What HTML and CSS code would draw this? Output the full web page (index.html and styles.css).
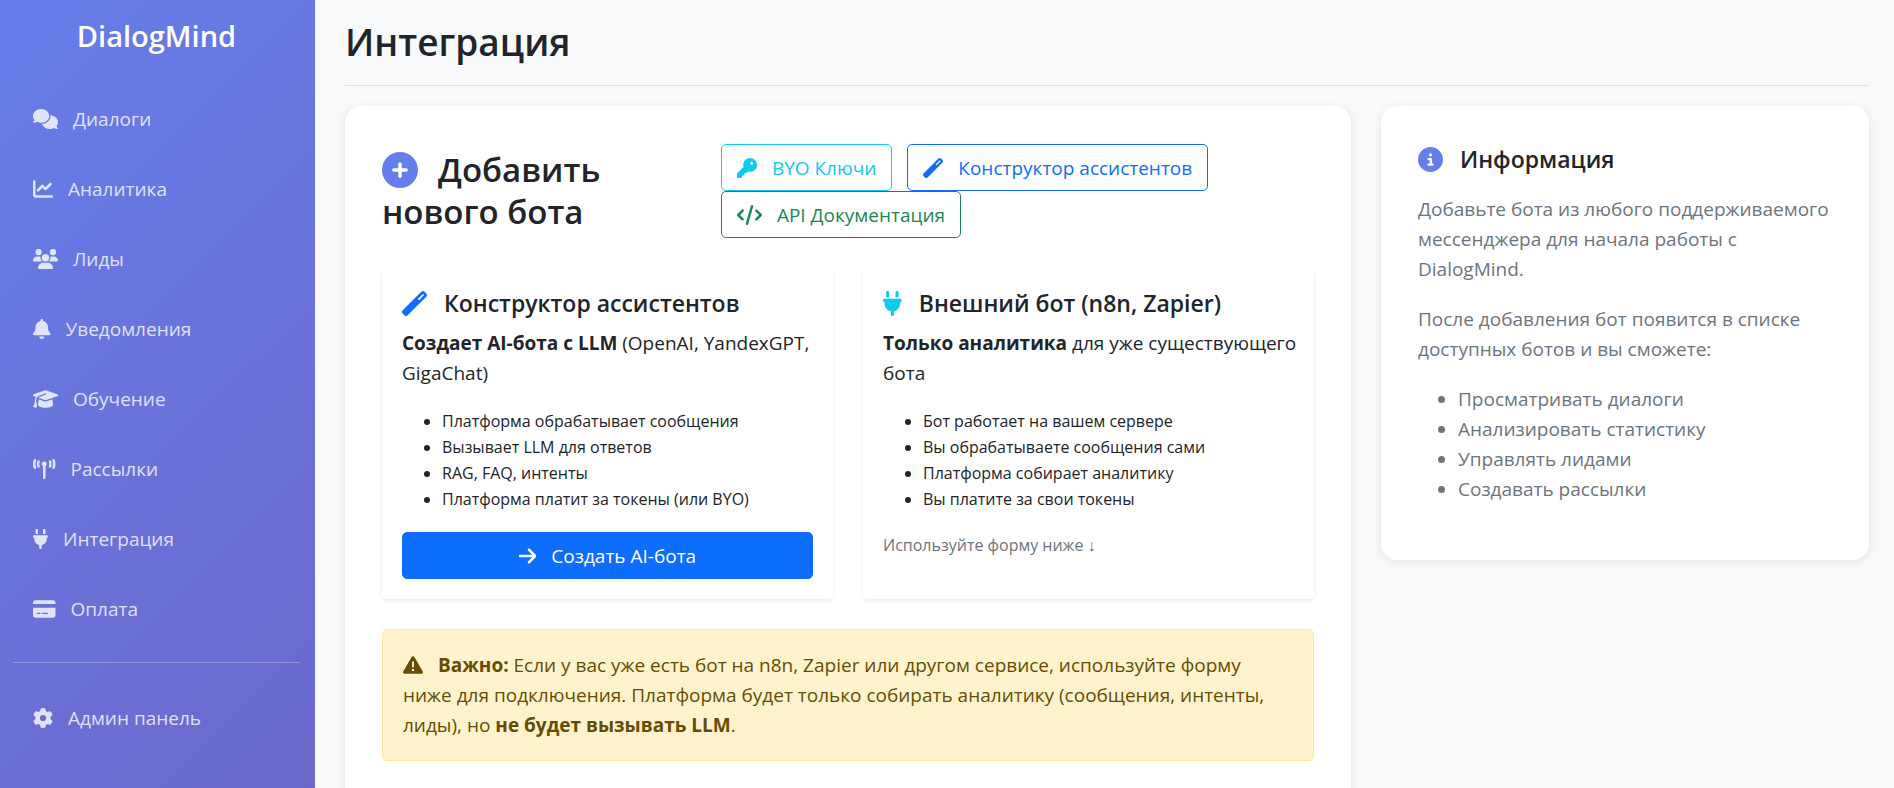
FILE: index.html
```
<!DOCTYPE html>
<html lang="ru">
<head>
  <meta charset="UTF-8" />
  <meta name="viewport" content="width=device-width, initial-scale=1.0"/>
  <title>Интеграция - DialogMind</title>
  <link rel="stylesheet" href="styles.css">
</head>
<body>

  <div class="app">
    <nav class="sidebar">
      <h4 class="brand">DialogMind</h4>
      <a class="nav-link" href="#"><svg class="icon" viewBox="0 0 640 512"><path d="M208 352c114.9 0 208-78.8 208-176S322.9 0 208 0S0 78.8 0 176c0 38.6 14.7 74.3 39.6 103.4c-3.5 9.4-8.7 17.7-14.2 24.7c-4.8 6.2-9.7 11-13.3 14.3c-1.8 1.6-3.3 2.9-4.3 3.7c-.5 .4-.9 .7-1.1 .8l-.2 .2C1 327.2-1.4 334.4 .8 340.9S9.1 352 16 352c21.8 0 43.8-5.6 62.1-12.5c9.2-3.5 17.8-7.4 25.2-11.4C134.1 343.3 169.8 352 208 352zM448 176c0 112.3-99.1 196.9-216.5 207C255.8 457.4 336.4 512 432 512c38.2 0 73.9-8.7 104.7-23.9c7.5 4 16 7.9 25.2 11.4c18.3 6.9 40.3 12.5 62.1 12.5c6.9 0 13.1-4.5 15.2-11.1c2.1-6.6-.2-13.8-5.8-17.9l-.2-.2c-.2-.2-.6-.4-1.1-.8c-1-.8-2.5-2-4.3-3.7c-3.6-3.3-8.5-8.1-13.3-14.3c-5.5-7-10.7-15.4-14.2-24.7c24.9-29 39.6-64.7 39.6-103.4c0-92.8-84.9-168.9-192.6-175.5c.4 5.1 .6 10.3 .6 15.5z"/></svg>Диалоги</a>
      <a class="nav-link" href="#"><svg class="icon" viewBox="0 0 512 512"><path d="M64 64c0-17.7-14.3-32-32-32S0 46.3 0 64V400c0 44.2 35.8 80 80 80H480c17.7 0 32-14.3 32-32s-14.3-32-32-32H80c-8.8 0-16-7.2-16-16V64zm406.6 86.6c12.5-12.5 12.5-32.8 0-45.3s-32.8-12.5-45.3 0L320 210.7l-57.4-57.4c-12.5-12.5-32.8-12.5-45.3 0l-112 112c-12.5 12.5-12.5 32.8 0 45.3s32.8 12.5 45.3 0L240 221.3l57.4 57.4c12.5 12.5 32.8 12.5 45.3 0l128-128z"/></svg>Аналитика</a>
      <a class="nav-link" href="#"><svg class="icon" viewBox="0 0 640 512"><path d="M144 0a80 80 0 1 1 0 160A80 80 0 1 1 144 0zM512 0a80 80 0 1 1 0 160A80 80 0 1 1 512 0zM0 298.7C0 239.8 47.8 192 106.7 192h42.7c15.9 0 31 3.5 44.6 9.7c-1.3 7.2-1.9 14.7-1.9 22.3c0 38.2 16.8 72.5 43.3 96c-.2 0-.4 0-.7 0H21.3C9.6 320 0 310.4 0 298.7zM405.3 320c-.2 0-.4 0-.7 0c26.6-23.5 43.3-57.8 43.3-96c0-7.6-.7-15-1.9-22.3c13.6-6.3 28.7-9.7 44.6-9.7h42.7C592.2 192 640 239.8 640 298.7c0 11.8-9.6 21.3-21.3 21.3H405.3zM224 224a96 96 0 1 1 192 0 96 96 0 1 1 -192 0zM128 485.3C128 411.7 187.7 352 261.3 352H378.7C452.3 352 512 411.7 512 485.3c0 14.7-11.9 26.7-26.7 26.7H154.7c-14.7 0-26.7-11.9-26.7-26.7z"/></svg>Лиды</a>
      <a class="nav-link" href="#"><svg class="icon" viewBox="0 0 448 512"><path d="M224 0c-17.7 0-32 14.3-32 32V51.2C119 66 64 130.6 64 208v18.8c0 47-17.3 92.4-48.5 127.6l-7.4 8.3c-8.4 9.4-10.4 22.9-5.3 34.4S19.4 416 32 416H416c12.6 0 24-7.4 29.2-18.9s3.1-25-5.3-34.4l-7.4-8.3C401.3 319.2 384 273.9 384 226.8V208c0-77.4-55-142-128-156.8V32c0-17.7-14.3-32-32-32zm45.3 493.3c12-12 18.7-28.3 18.7-45.3H224 160c0 17 6.7 33.3 18.7 45.3s28.3 18.7 45.3 18.7s33.3-6.7 45.3-18.7z"/></svg>Уведомления</a>
      <a class="nav-link" href="#"><svg class="icon" viewBox="0 0 640 512"><path d="M320 32c-8.1 0-16.1 1.4-23.7 4.1L15.8 137.4C6.3 140.9 0 149.9 0 160s6.3 19.1 15.8 22.6l57.9 20.9C57.3 229.3 48 259.8 48 291.9v28.1c0 28.4-10.8 57.7-22.3 80.8c-6.5 13-13.9 25.8-22.5 37.6C0 442.7-.9 448.3 .9 453.4s6 8.9 11.2 10.2l64 16c4.2 1.1 8.7 .3 12.4-2s6.3-6.1 7.1-10.4c8.6-42.8 4.3-81.2-2.1-108.7C90.3 344.3 86 329.8 80 316.5V291.9c0-30.2 10.2-58.7 27.9-81.5c12.9-15.5 29.6-28 49.2-35.7l157-61.7c8.2-3.2 17.5 .8 20.7 9s-.8 17.5-9 20.7l-157 61.7c-12.4 4.9-23.3 12.4-32.2 21.6l159.6 57.6c7.6 2.7 15.6 4.1 23.7 4.1s16.1-1.4 23.7-4.1L624.2 182.6c9.5-3.4 15.8-12.5 15.8-22.6s-6.3-19.1-15.8-22.6L343.7 36.1C336.1 33.4 328.1 32 320 32zM128 408c0 35.3 86 72 192 72s192-36.7 192-72L496.7 262.6 354.5 314c-11.1 4-22.8 6-34.5 6s-23.5-2-34.5-6L143.3 262.6 128 408z"/></svg>Обучение</a>
      <a class="nav-link" href="#"><svg class="icon" viewBox="0 0 576 512"><path d="M80.3 44C69.8 69.9 64 98.2 64 128s5.8 58.1 16.3 84c6.6 16.4-1.3 35-17.7 41.7s-35-1.3-41.7-17.7C7.4 202.6 0 166.1 0 128S7.4 53.4 20.9 20C27.6 3.6 46.2-4.3 62.6 2.3S86.9 27.6 80.3 44zM555.1 20C568.6 53.4 576 89.9 576 128s-7.4 74.6-20.9 108c-6.6 16.4-25.3 24.3-41.7 17.7S489.1 228.4 495.7 212c10.5-25.9 16.3-54.2 16.3-84s-5.8-58.1-16.3-84C489.1 27.6 497 9 513.4 2.3s35 1.3 41.7 17.7zM352 128c0 23.7-12.9 44.4-32 55.4V480c0 17.7-14.3 32-32 32s-32-14.3-32-32V183.4c-19.1-11.1-32-31.7-32-55.4c0-35.3 28.7-64 64-64s64 28.7 64 64zM170.6 76.8C163.8 92.4 160 109.7 160 128s3.8 35.6 10.6 51.2c7.1 16.2-.3 35.1-16.5 42.1s-35.1-.3-42.1-16.5c-10.3-23.6-16-49.6-16-76.8s5.7-53.2 16-76.8c7.1-16.2 25.9-23.6 42.1-16.5s23.6 25.9 16.5 42.1zM464 51.2c10.3 23.6 16 49.6 16 76.8s-5.7 53.2-16 76.8c-7.1 16.2-25.9 23.6-42.1 16.5s-23.6-25.9-16.5-42.1c6.8-15.6 10.6-32.9 10.6-51.2s-3.8-35.6-10.6-51.2c-7.1-16.2 .3-35.1 16.5-42.1s35.1 .3 42.1 16.5z"/></svg>Рассылки</a>
      <a class="nav-link" href="#"><svg class="icon" viewBox="0 0 384 512"><path d="M96 0C78.3 0 64 14.3 64 32v96h64V32c0-17.7-14.3-32-32-32zM288 0c-17.7 0-32 14.3-32 32v96h64V32c0-17.7-14.3-32-32-32zM32 160c-17.7 0-32 14.3-32 32s14.3 32 32 32v32c0 77.4 55 142 128 156.8V480c0 17.7 14.3 32 32 32s32-14.3 32-32V412.8C297 398 352 333.4 352 256V224c17.7 0 32-14.3 32-32s-14.3-32-32-32H32z"/></svg>Интеграция</a>
      <a class="nav-link" href="#"><svg class="icon" viewBox="0 0 576 512"><path d="M64 32C28.7 32 0 60.7 0 96v32H576V96c0-35.3-28.7-64-64-64H64zM576 224H0V416c0 35.3 28.7 64 64 64H512c35.3 0 64-28.7 64-64V224zM112 352h64c8.8 0 16 7.2 16 16s-7.2 16-16 16H112c-8.8 0-16-7.2-16-16s7.2-16 16-16zm112 16c0-8.8 7.2-16 16-16H368c8.8 0 16 7.2 16 16s-7.2 16-16 16H240c-8.8 0-16-7.2-16-16z"/></svg>Оплата</a>
      <hr class="divider">
      <a class="nav-link" href="#"><svg class="icon" viewBox="0 0 512 512"><path d="M495.9 166.6c3.2 8.7 .5 18.4-6.4 24.6l-43.3 39.4c1.1 8.3 1.7 16.8 1.7 25.4s-.6 17.1-1.7 25.4l43.3 39.4c6.9 6.2 9.6 15.9 6.4 24.6c-4.4 11.9-9.7 23.3-15.8 34.3l-4.7 8.1c-6.6 11-14 21.4-22.1 31.2c-5.9 7.2-15.7 9.6-24.5 6.8l-55.7-17.7c-13.4 10.3-28.2 18.9-44 25.4l-12.5 57.1c-2 9.1-9 16.3-18.2 17.8c-13.8 2.3-28 3.5-42.5 3.5s-28.7-1.2-42.5-3.5c-9.2-1.5-16.2-8.7-18.2-17.8l-12.5-57.1c-15.8-6.5-30.6-15.1-44-25.4L83.1 425.9c-8.8 2.8-18.6 .3-24.5-6.8c-8.1-9.8-15.5-20.2-22.1-31.2l-4.7-8.1c-6.1-11-11.4-22.4-15.8-34.3c-3.2-8.7-.5-18.4 6.4-24.6l43.3-39.4C64.6 273.1 64 264.6 64 256s.6-17.1 1.7-25.4L22.4 191.2c-6.9-6.2-9.6-15.9-6.4-24.6c4.4-11.9 9.7-23.3 15.8-34.3l4.7-8.1c6.6-11 14-21.4 22.1-31.2c5.9-7.2 15.7-9.6 24.5-6.8l55.7 17.7c13.4-10.3 28.2-18.9 44-25.4l12.5-57.1c2-9.1 9-16.3 18.2-17.8C227.3 1.2 241.5 0 256 0s28.7 1.2 42.5 3.5c9.2 1.5 16.2 8.7 18.2 17.8l12.5 57.1c15.8 6.5 30.6 15.1 44 25.4l55.7-17.7c8.8-2.8 18.6-.3 24.5 6.8c8.1 9.8 15.5 20.2 22.1 31.2l4.7 8.1c6.1 11 11.4 22.4 15.8 34.3zM256 336a80 80 0 1 0 0-160 80 80 0 1 0 0 160z"/></svg>Админ панель</a>
    </nav>

    <main class="main">
      <header class="page-header">
        <h1>Интеграция</h1>
      </header>

      <div class="row">
        <section class="card">
          <div class="card-head">
            <h3><svg class="icon accent" viewBox="0 0 512 512"><path d="M256 512A256 256 0 1 0 256 0a256 256 0 1 0 0 512zM232 344V280H168c-13.3 0-24-10.7-24-24s10.7-24 24-24h64V168c0-13.3 10.7-24 24-24s24 10.7 24 24v64h64c13.3 0 24 10.7 24 24s-10.7 24-24 24H280v64c0 13.3-10.7 24-24 24s-24-10.7-24-24z"/></svg>Добавить<br>нового бота</h3>
            <div class="buttons">
              <a class="btn btn-info" href="#"><svg class="icon" viewBox="0 0 512 512"><path d="M336 352c97.2 0 176-78.8 176-176S433.2 0 336 0S160 78.8 160 176c0 18.7 2.9 36.8 8.3 53.7L7 391c-4.5 4.5-7 10.6-7 17v80c0 13.3 10.7 24 24 24h80c13.3 0 24-10.7 24-24V448h40c13.3 0 24-10.7 24-24V384h40c6.4 0 12.5-2.5 17-7l33.3-33.3c16.9 5.4 35 8.3 53.7 8.3zM376 96a40 40 0 1 1 0 80 40 40 0 1 1 0-80z"/></svg>BYO Ключи</a>
              <a class="btn btn-outline" href="#"><svg class="icon" viewBox="0 0 512 512"><path d="M14.1 463.3c-18.7-18.7-18.7-49.1 0-67.9L395.4 14.1c18.7-18.7 49.1-18.7 67.9 0l34.6 34.6c18.7 18.7 18.7 49.1 0 67.9L116.5 497.9c-18.7 18.7-49.1 18.7-67.9 0L14.1 463.3zM347.6 187.6l105-105L429.4 59.3l-105 105 23.3 23.3z"/></svg>Конструктор ассистентов</a>
              <a class="btn btn-success" href="#"><svg class="icon" viewBox="0 0 640 512"><path d="M392.8 1.2c-17-4.9-34.7 5-39.6 22l-128 448c-4.9 17 5 34.7 22 39.6s34.7-5 39.6-22l128-448c4.9-17-5-34.7-22-39.6zm80.6 120.1c-12.5 12.5-12.5 32.8 0 45.3L562.7 256l-89.4 89.4c-12.5 12.5-12.5 32.8 0 45.3s32.8 12.5 45.3 0l112-112c12.5-12.5 12.5-32.8 0-45.3l-112-112c-12.5-12.5-32.8-12.5-45.3 0zm-306.7 0c-12.5-12.5-32.8-12.5-45.3 0l-112 112c-12.5 12.5-12.5 32.8 0 45.3l112 112c12.5 12.5 32.8 12.5 45.3 0s12.5-32.8 0-45.3L77.3 256l89.4-89.4c12.5-12.5 12.5-32.8 0-45.3z"/></svg>API Документация</a>
            </div>
          </div>

          <div class="options">
            <div class="option">
              <h5><svg class="icon primary" viewBox="0 0 512 512"><path d="M14.1 463.3c-18.7-18.7-18.7-49.1 0-67.9L395.4 14.1c18.7-18.7 49.1-18.7 67.9 0l34.6 34.6c18.7 18.7 18.7 49.1 0 67.9L116.5 497.9c-18.7 18.7-49.1 18.7-67.9 0L14.1 463.3zM347.6 187.6l105-105L429.4 59.3l-105 105 23.3 23.3z"/></svg>Конструктор ассистентов</h5>
              <p><strong>Создает AI-бота с LLM</strong> (OpenAI, YandexGPT, GigaChat)</p>
              <ul class="small">
                <li>Платформа обрабатывает сообщения</li>
                <li>Вызывает LLM для ответов</li>
                <li>RAG, FAQ, интенты</li>
                <li>Платформа платит за токены (или BYO)</li>
              </ul>
              <a class="btn btn-primary" href="#"><svg class="icon" viewBox="0 0 448 512"><path d="M438.6 278.6c12.5-12.5 12.5-32.8 0-45.3l-160-160c-12.5-12.5-32.8-12.5-45.3 0s-12.5 32.8 0 45.3L338.8 224 32 224c-17.7 0-32 14.3-32 32s14.3 32 32 32l306.7 0L233.4 393.4c-12.5 12.5-12.5 32.8 0 45.3s32.8 12.5 45.3 0l160-160z"/></svg>Создать AI-бота</a>
            </div>
            <div class="option">
              <h5><svg class="icon info" viewBox="0 0 384 512"><path d="M96 0C78.3 0 64 14.3 64 32v96h64V32c0-17.7-14.3-32-32-32zM288 0c-17.7 0-32 14.3-32 32v96h64V32c0-17.7-14.3-32-32-32zM32 160c-17.7 0-32 14.3-32 32s14.3 32 32 32v32c0 77.4 55 142 128 156.8V480c0 17.7 14.3 32 32 32s32-14.3 32-32V412.8C297 398 352 333.4 352 256V224c17.7 0 32-14.3 32-32s-14.3-32-32-32H32z"/></svg>Внешний бот (n8n, Zapier)</h5>
              <p><strong>Только аналитика</strong> для уже существующего бота</p>
              <ul class="small">
                <li>Бот работает на вашем сервере</li>
                <li>Вы обрабатываете сообщения сами</li>
                <li>Платформа собирает аналитику</li>
                <li>Вы платите за свои токены</li>
              </ul>
              <p class="small muted">Используйте форму ниже ↓</p>
            </div>
          </div>

          <div class="alert">
            <svg class="icon" viewBox="0 0 512 512"><path d="M256 32c14.2 0 27.3 7.5 34.5 19.8l216 368c7.3 12.4 7.3 27.7 .2 40.1S486.3 480 472 480H40c-14.3 0-27.6-7.7-34.7-20.1s-7-27.8 .2-40.1l216-368C228.7 39.5 241.8 32 256 32zm0 128c-13.3 0-24 10.7-24 24V296c0 13.3 10.7 24 24 24s24-10.7 24-24V184c0-13.3-10.7-24-24-24zm32 224a32 32 0 1 0 -64 0 32 32 0 1 0 64 0z"/></svg><strong>Важно:</strong> Если у вас уже есть бот на n8n, Zapier или другом сервисе, используйте форму ниже для подключения. Платформа будет только собирать аналитику (сообщения, интенты, лиды), но <strong>не будет вызывать LLM</strong>.
          </div>
        </section>

        <aside class="card">
          <h5><svg class="icon accent" viewBox="0 0 512 512"><path d="M256 512A256 256 0 1 0 256 0a256 256 0 1 0 0 512zM216 336h24V272H216c-13.3 0-24-10.7-24-24s10.7-24 24-24h48c13.3 0 24 10.7 24 24v88h8c13.3 0 24 10.7 24 24s-10.7 24-24 24H216c-13.3 0-24-10.7-24-24s10.7-24 24-24zm40-208a32 32 0 1 1 0 64 32 32 0 1 1 0-64z"/></svg>Информация</h5>
          <div class="muted">
            <p>Добавьте бота из любого поддерживаемого мессенджера для начала работы с DialogMind.</p>
            <p>После добавления бот появится в списке доступных ботов и вы сможете:</p>
            <ul>
              <li>Просматривать диалоги</li>
              <li>Анализировать статистику</li>
              <li>Управлять лидами</li>
              <li>Создавать рассылки</li>
            </ul>
          </div>
        </aside>
      </div>
    </main>
  </div>

</body>
</html>
```
FILE: styles.css
```
:root {
  --accent: #667eea;
  --primary: #0d6efd;
  --info: #0dcaf0;
  --success: #198754;
  --text: #212529;
  --muted: #6c757d;
}

* {
  margin: 0;
  padding: 0;
  box-sizing: border-box;
}

body {
  background: #f8f9fb;
  color: var(--text);
  font-family: 'Segoe UI', 'Open Sans', 'Noto Sans', sans-serif;
  font-size: 19px;
  line-height: 30px;
}

a {
  text-decoration: none;
}

ul {
  padding-left: 40px;
  margin-bottom: 20px;
}

p {
  margin-bottom: 20px;
}

.app {
  display: flex;
  height: 100vh;
  overflow: hidden;
}

.icon {
  height: 20px;
  flex-shrink: 0;
  fill: currentColor;
}

.accent {
  color: var(--accent);
}

.primary {
  color: var(--primary);
}

.info {
  color: var(--info);
}

.muted {
  color: var(--muted);
}

.small {
  font-size: 16px;
  line-height: 26px;
}

/* Sidebar */
.sidebar {
  flex: 0 0 315px;
  padding: 18px 15px 0 13px;
  background: linear-gradient(135deg, #667eea, #6c68cb);
}

.brand {
  margin-bottom: 30px;
  color: white;
  font-size: 29px;
  font-weight: 600;
  line-height: 36px;
  text-align: center;
}

.nav-link {
  display: flex;
  align-items: center;
  gap: 15px;
  padding: 20px;
  color: rgba(255, 255, 255, 0.8);
}

.nav-link:hover {
  color: white;
}

.divider {
  margin: 18px 0 20px;
  border: none;
  border-top: 1px solid rgba(255, 255, 255, 0.25);
}

/* Content */
.main {
  flex: 1;
  min-width: 0;
  padding: 18px 25px 0 30px;
  overflow-y: auto;
  scrollbar-width: none;
}

.page-header {
  padding-bottom: 19px;
  margin-bottom: 20px;
  border-bottom: 1px solid #dee2e6;
}

h1 {
  font-size: 37px;
  font-weight: 600;
  line-height: 48px;
}

.row {
  display: grid;
  grid-template-columns: 1006fr 488fr;
  gap: 30px;
  align-items: start;
}

.card {
  padding: 38px 37px 36px;
  background: white;
  border-radius: 16px;
  box-shadow: 0 2px 10px rgba(0, 0, 0, 0.08);
}

section.card {
  padding-bottom: 80px;
}

.card-head {
  display: grid;
  grid-template-columns: 4fr 7fr;
  align-items: center;
  margin-bottom: 30px;
}

h3 {
  font-size: 33px;
  font-weight: 600;
  line-height: 42px;
}

h3 .icon {
  height: 36px;
  margin-right: 20px;
  vertical-align: -6px;
}

h5 {
  display: flex;
  align-items: center;
  gap: 17px;
  font-size: 23px;
  font-weight: 600;
  line-height: 30px;
  margin-bottom: 10px;
}

h5 .icon {
  height: 25px;
}

aside h5 {
  margin-bottom: 20px;
}

.buttons {
  display: flex;
  flex-wrap: wrap;
  column-gap: 15px;
}

.btn {
  display: flex;
  align-items: center;
  justify-content: center;
  gap: 15px;
  height: 47px;
  padding: 0 15px;
  border: 1px solid currentColor;
  border-radius: 5px;
}

.btn-info {
  color: var(--info);
}

.btn-outline {
  color: var(--primary);
}

.btn-success {
  color: var(--success);
}

.btn-primary {
  background: var(--primary);
  border-color: var(--primary);
  color: white;
}

.options {
  display: grid;
  grid-template-columns: 1fr 1fr;
  gap: 30px;
  margin-bottom: 30px;
}

.option {
  padding: 20px;
  border-radius: 5px;
  box-shadow: 0 2px 5px rgba(0, 0, 0, 0.08);
}

.option p {
  margin-right: -10px;
}

.alert {
  padding: 20px;
  background: #fff3cd;
  border: 1px solid #ffe69c;
  border-radius: 5px;
  color: #664d03;
}

.alert .icon {
  margin-right: 15px;
  vertical-align: -3px;
}
```
